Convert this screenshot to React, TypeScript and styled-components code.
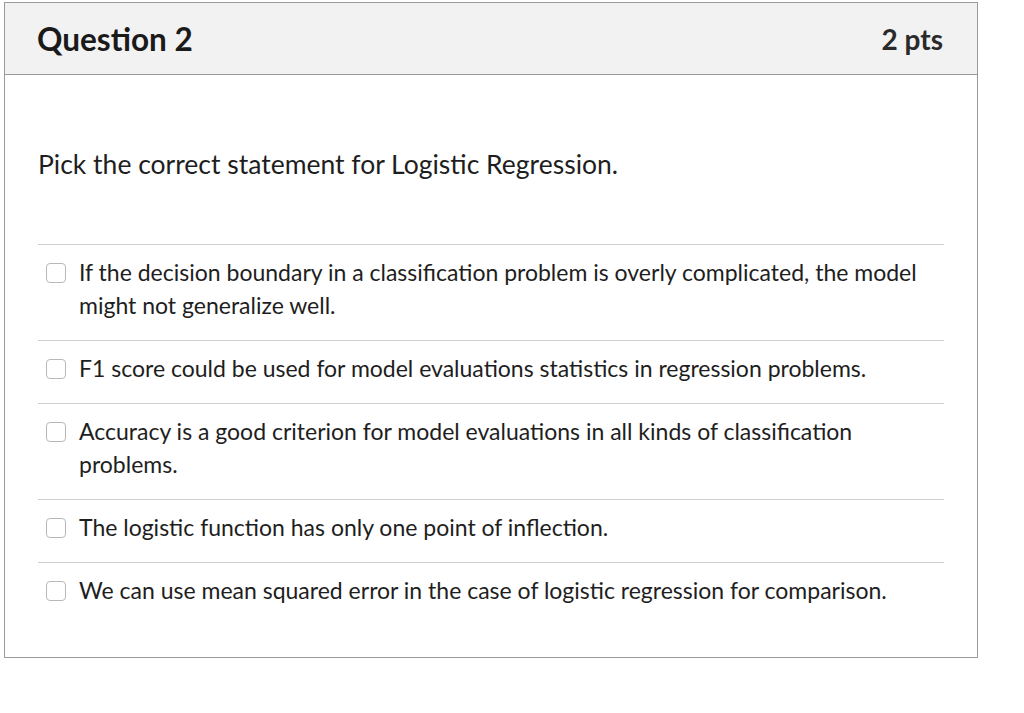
import React from "react";
import styled, { createGlobalStyle } from "styled-components";

const GlobalStyle = createGlobalStyle`
    html, body {
        margin: 0;
        padding: 0;
        background: #ffffff;
    }
    body {
        font-family: Lato, "Open Sans", "Liberation Sans", sans-serif;
        color: #1e1e1e;
    }
`;

const Page = styled.div`
    padding: 2px 0 0 4px;
`;

const Card = styled.section`
    width: 972px;
    height: 654px;
    border: 1px solid #9a9a9a;
    background: #ffffff;
    display: flex;
    flex-direction: column;
`;

const Header = styled.header`
    height: 72px;
    box-sizing: border-box;
    background: #f2f2f2;
    border-bottom: 1px solid #9a9a9a;
    display: flex;
    align-items: center;
    justify-content: space-between;
    padding: 0 34px 0 32px;
`;

const Title = styled.h2`
    margin: 0;
    font-size: 31.5px;
    font-weight: 700;
    color: #1a1a1a;
`;

const Points = styled.span`
    font-size: 28px;
    font-weight: 700;
    color: #2a2a2a;
`;

const Body = styled.div`
    padding: 0 33px 0 33px;
`;

const Prompt = styled.p`
    margin: 73px 0 64px;
    font-size: 26.5px;
    line-height: 32px;
`;

const Answers = styled.div`
    display: flex;
    flex-direction: column;
`;

const Answer = styled.label`
    display: flex;
    align-items: flex-start;
    gap: 13px;
    border-top: 1px solid #cfcfcf;
    padding: 11px 0 18px 8px;
    font-size: 23px;
    line-height: 33px;
`;

const Box = styled.span`
    flex: none;
    width: 18px;
    height: 18px;
    margin-top: 7px;
    border: 1px solid #b8b8b8;
    border-radius: 4px;
    background: #fff;
`;

const AnswerText = styled.span`
    flex: 1;
`;

const answers = [
    "If the decision boundary in a classification problem is overly complicated, the model might not generalize well.",
    "F1 score could be used for model evaluations statistics in regression problems.",
    "Accuracy is a good criterion for model evaluations in all kinds of classification problems.",
    "The logistic function has only one point of inflection.",
    "We can use mean squared error in the case of logistic regression for comparison.",
];

export default function App() {
    return (
        <Page>
            <GlobalStyle />
            <Card>
                <Header>
                    <Title>Question 2</Title>
                    <Points>2 pts</Points>
                </Header>
                <Body>
                    <Prompt>Pick the correct statement for Logistic Regression.</Prompt>
                    <Answers>
                        {answers.map((a) => (
                            <Answer key={a}>
                                <Box />
                                <AnswerText>{a}</AnswerText>
                            </Answer>
                        ))}
                    </Answers>
                </Body>
            </Card>
        </Page>
    );
}
